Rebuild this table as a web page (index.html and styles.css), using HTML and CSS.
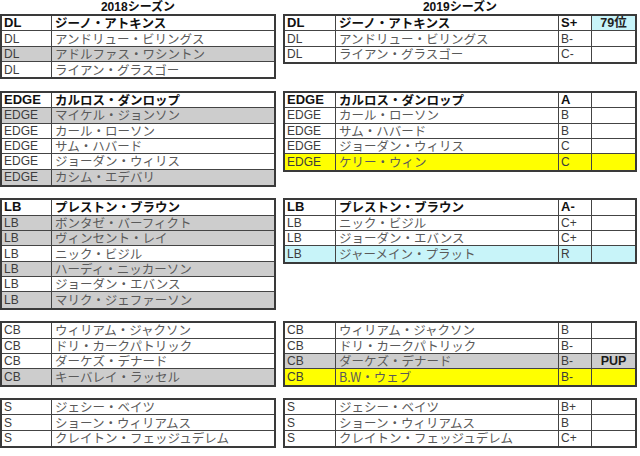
FILE: index.html
```html
<!DOCTYPE html>
<html lang="ja">
<head>
<meta charset="utf-8">
<title>2018-2019シーズン</title>
<link rel="stylesheet" href="styles.css">
</head>
<body>
<div class="sheet">
  <div class="titles">
    <div class="title t18">2018シーズン</div>
    <div class="title t19">2019シーズン</div>
  </div>

  <div class="group">
    <div class="tbl t18">
      <div class="row head"><div class="c pos">DL</div><div class="c name">ジーノ・アトキンス</div></div>
      <div class="row"><div class="c pos">DL</div><div class="c name">アンドリュー・ビリングス</div></div>
      <div class="row gray"><div class="c pos">DL</div><div class="c name">アドルファス・ワシントン</div></div>
      <div class="row"><div class="c pos">DL</div><div class="c name">ライアン・グラスゴー</div></div>
    </div>
    <div class="tbl t19">
      <div class="row head"><div class="c pos">DL</div><div class="c name">ジーノ・アトキンス</div><div class="c grade">S+</div><div class="c note cyan">79位</div></div>
      <div class="row"><div class="c pos">DL</div><div class="c name">アンドリュー・ビリングス</div><div class="c grade">B-</div><div class="c note"></div></div>
      <div class="row"><div class="c pos">DL</div><div class="c name">ライアン・グラスゴー</div><div class="c grade">C-</div><div class="c note"></div></div>
    </div>
  </div>

  <div class="group">
    <div class="tbl t18">
      <div class="row head"><div class="c pos">EDGE</div><div class="c name">カルロス・ダンロップ</div></div>
      <div class="row gray"><div class="c pos">EDGE</div><div class="c name">マイケル・ジョンソン</div></div>
      <div class="row"><div class="c pos">EDGE</div><div class="c name">カール・ローソン</div></div>
      <div class="row"><div class="c pos">EDGE</div><div class="c name">サム・ハバード</div></div>
      <div class="row"><div class="c pos">EDGE</div><div class="c name">ジョーダン・ウィリス</div></div>
      <div class="row gray"><div class="c pos">EDGE</div><div class="c name">カシム・エデバリ</div></div>
    </div>
    <div class="tbl t19">
      <div class="row head"><div class="c pos">EDGE</div><div class="c name">カルロス・ダンロップ</div><div class="c grade">A</div><div class="c note"></div></div>
      <div class="row"><div class="c pos">EDGE</div><div class="c name">カール・ローソン</div><div class="c grade">B</div><div class="c note"></div></div>
      <div class="row"><div class="c pos">EDGE</div><div class="c name">サム・ハバード</div><div class="c grade">B</div><div class="c note"></div></div>
      <div class="row"><div class="c pos">EDGE</div><div class="c name">ジョーダン・ウィリス</div><div class="c grade">C</div><div class="c note"></div></div>
      <div class="row yellow"><div class="c pos">EDGE</div><div class="c name">ケリー・ウィン</div><div class="c grade">C</div><div class="c note"></div></div>
    </div>
  </div>

  <div class="group">
    <div class="tbl t18">
      <div class="row head"><div class="c pos">LB</div><div class="c name">プレストン・ブラウン</div></div>
      <div class="row gray"><div class="c pos">LB</div><div class="c name">ボンタゼ・バーフィクト</div></div>
      <div class="row gray"><div class="c pos">LB</div><div class="c name">ヴィンセント・レイ</div></div>
      <div class="row"><div class="c pos">LB</div><div class="c name">ニック・ビジル</div></div>
      <div class="row gray"><div class="c pos">LB</div><div class="c name">ハーディ・ニッカーソン</div></div>
      <div class="row"><div class="c pos">LB</div><div class="c name">ジョーダン・エバンス</div></div>
      <div class="row gray"><div class="c pos">LB</div><div class="c name">マリク・ジェファーソン</div></div>
    </div>
    <div class="tbl t19">
      <div class="row head"><div class="c pos">LB</div><div class="c name">プレストン・ブラウン</div><div class="c grade">A-</div><div class="c note"></div></div>
      <div class="row"><div class="c pos">LB</div><div class="c name">ニック・ビジル</div><div class="c grade">C+</div><div class="c note"></div></div>
      <div class="row"><div class="c pos">LB</div><div class="c name">ジョーダン・エバンス</div><div class="c grade">C+</div><div class="c note"></div></div>
      <div class="row cyanrow"><div class="c pos">LB</div><div class="c name">ジャーメイン・プラット</div><div class="c grade">R</div><div class="c note"></div></div>
    </div>
  </div>

  <div class="group">
    <div class="tbl t18">
      <div class="row"><div class="c pos">CB</div><div class="c name">ウィリアム・ジャクソン</div></div>
      <div class="row"><div class="c pos">CB</div><div class="c name">ドリ・カークパトリック</div></div>
      <div class="row"><div class="c pos">CB</div><div class="c name">ダーケズ・デナード</div></div>
      <div class="row gray"><div class="c pos">CB</div><div class="c name">キーバレイ・ラッセル</div></div>
    </div>
    <div class="tbl t19">
      <div class="row"><div class="c pos">CB</div><div class="c name">ウィリアム・ジャクソン</div><div class="c grade">B</div><div class="c note"></div></div>
      <div class="row"><div class="c pos">CB</div><div class="c name">ドリ・カークパトリック</div><div class="c grade">B-</div><div class="c note"></div></div>
      <div class="row gray"><div class="c pos">CB</div><div class="c name">ダーケズ・デナード</div><div class="c grade">B-</div><div class="c note strong">PUP</div></div>
      <div class="row yellow"><div class="c pos">CB</div><div class="c name">B.W・ウェブ</div><div class="c grade">B-</div><div class="c note"></div></div>
    </div>
  </div>

  <div class="group">
    <div class="tbl t18">
      <div class="row"><div class="c pos">S</div><div class="c name">ジェシー・ベイツ</div></div>
      <div class="row"><div class="c pos">S</div><div class="c name">ショーン・ウィリアムス</div></div>
      <div class="row"><div class="c pos">S</div><div class="c name">クレイトン・フェッジュデレム</div></div>
    </div>
    <div class="tbl t19">
      <div class="row"><div class="c pos">S</div><div class="c name">ジェシー・ベイツ</div><div class="c grade">B+</div><div class="c note"></div></div>
      <div class="row"><div class="c pos">S</div><div class="c name">ショーン・ウィリアムス</div><div class="c grade">B</div><div class="c note"></div></div>
      <div class="row"><div class="c pos">S</div><div class="c name">クレイトン・フェッジュデレム</div><div class="c grade">C+</div><div class="c note"></div></div>
    </div>
  </div>
</div>
</body>
</html>
```

FILE: styles.css
```css
html, body {
  margin: 0;
  padding: 0;
  background: #ffffff;
}

body {
  font-family: "Liberation Sans", "Noto Sans CJK JP", sans-serif;
  font-size: 12px;
  color: #333333;
}

.sheet {
  width: 640px;
  display: flex;
  flex-direction: column;
}

.titles {
  display: flex;
  gap: 7px;
  height: 14px;
}

.title {
  text-align: center;
  font-weight: bold;
  font-size: 12px;
  line-height: 14px;
  color: #111111;
}

.title.t18 { width: 276px; }
.title.t19 { width: 354px; }

.group {
  display: flex;
  align-items: flex-start;
  gap: 7px;
  margin-bottom: 11.36px;
}

.tbl {
  border: 2px solid #3a3a3a;
  display: flex;
  flex-direction: column;
}

.tbl.t18 { width: 276px; box-sizing: border-box; }
.tbl.t19 { width: 354px; box-sizing: border-box; }

.row {
  display: grid;
  height: 15.36px;
  box-sizing: border-box;
  border-bottom: 1px solid #444444;
}

.row:last-child { border-bottom: none; }

.t18 .row { grid-template-columns: 50px 222px; }
.t19 .row { grid-template-columns: 51px 223px 33px 43px; }

.c {
  box-sizing: border-box;
  border-right: 1px solid #444444;
  display: flex;
  align-items: center;
  padding-left: 2px;
  line-height: 14px;
  white-space: nowrap;
}

.c:last-child { border-right: none; }

.pos {
  color: #3c3c3c;
  font-size: 12px;
}

.name {
  font-family: "Noto Sans CJK JP", "Liberation Sans", sans-serif;
  font-size: 12.5px;
  color: #5a5a5a;
  padding-left: 3px;
}

.grade {
  color: #3c3c3c;
  font-size: 12px;
}

.note {
  justify-content: center;
  padding-left: 0;
}

.head .c {
  font-weight: bold;
  color: #111111;
}

.head .pos { font-size: 13px; }
.head .name { color: #111111; }
.head .grade { font-size: 13px; }

.note.cyan {
  background: #c8f4f9;
  font-weight: bold;
  font-family: "Liberation Sans", "Noto Sans CJK JP", sans-serif;
  font-size: 12.5px;
  color: #222222;
}

.note.strong {
  font-weight: bold;
  font-size: 12.5px;
  color: #1a1a1a;
}

.gray { background: #cdcdcd; }
.yellow { background: #ffff00; }
.cyanrow { background: #c8f4f9; }
```
